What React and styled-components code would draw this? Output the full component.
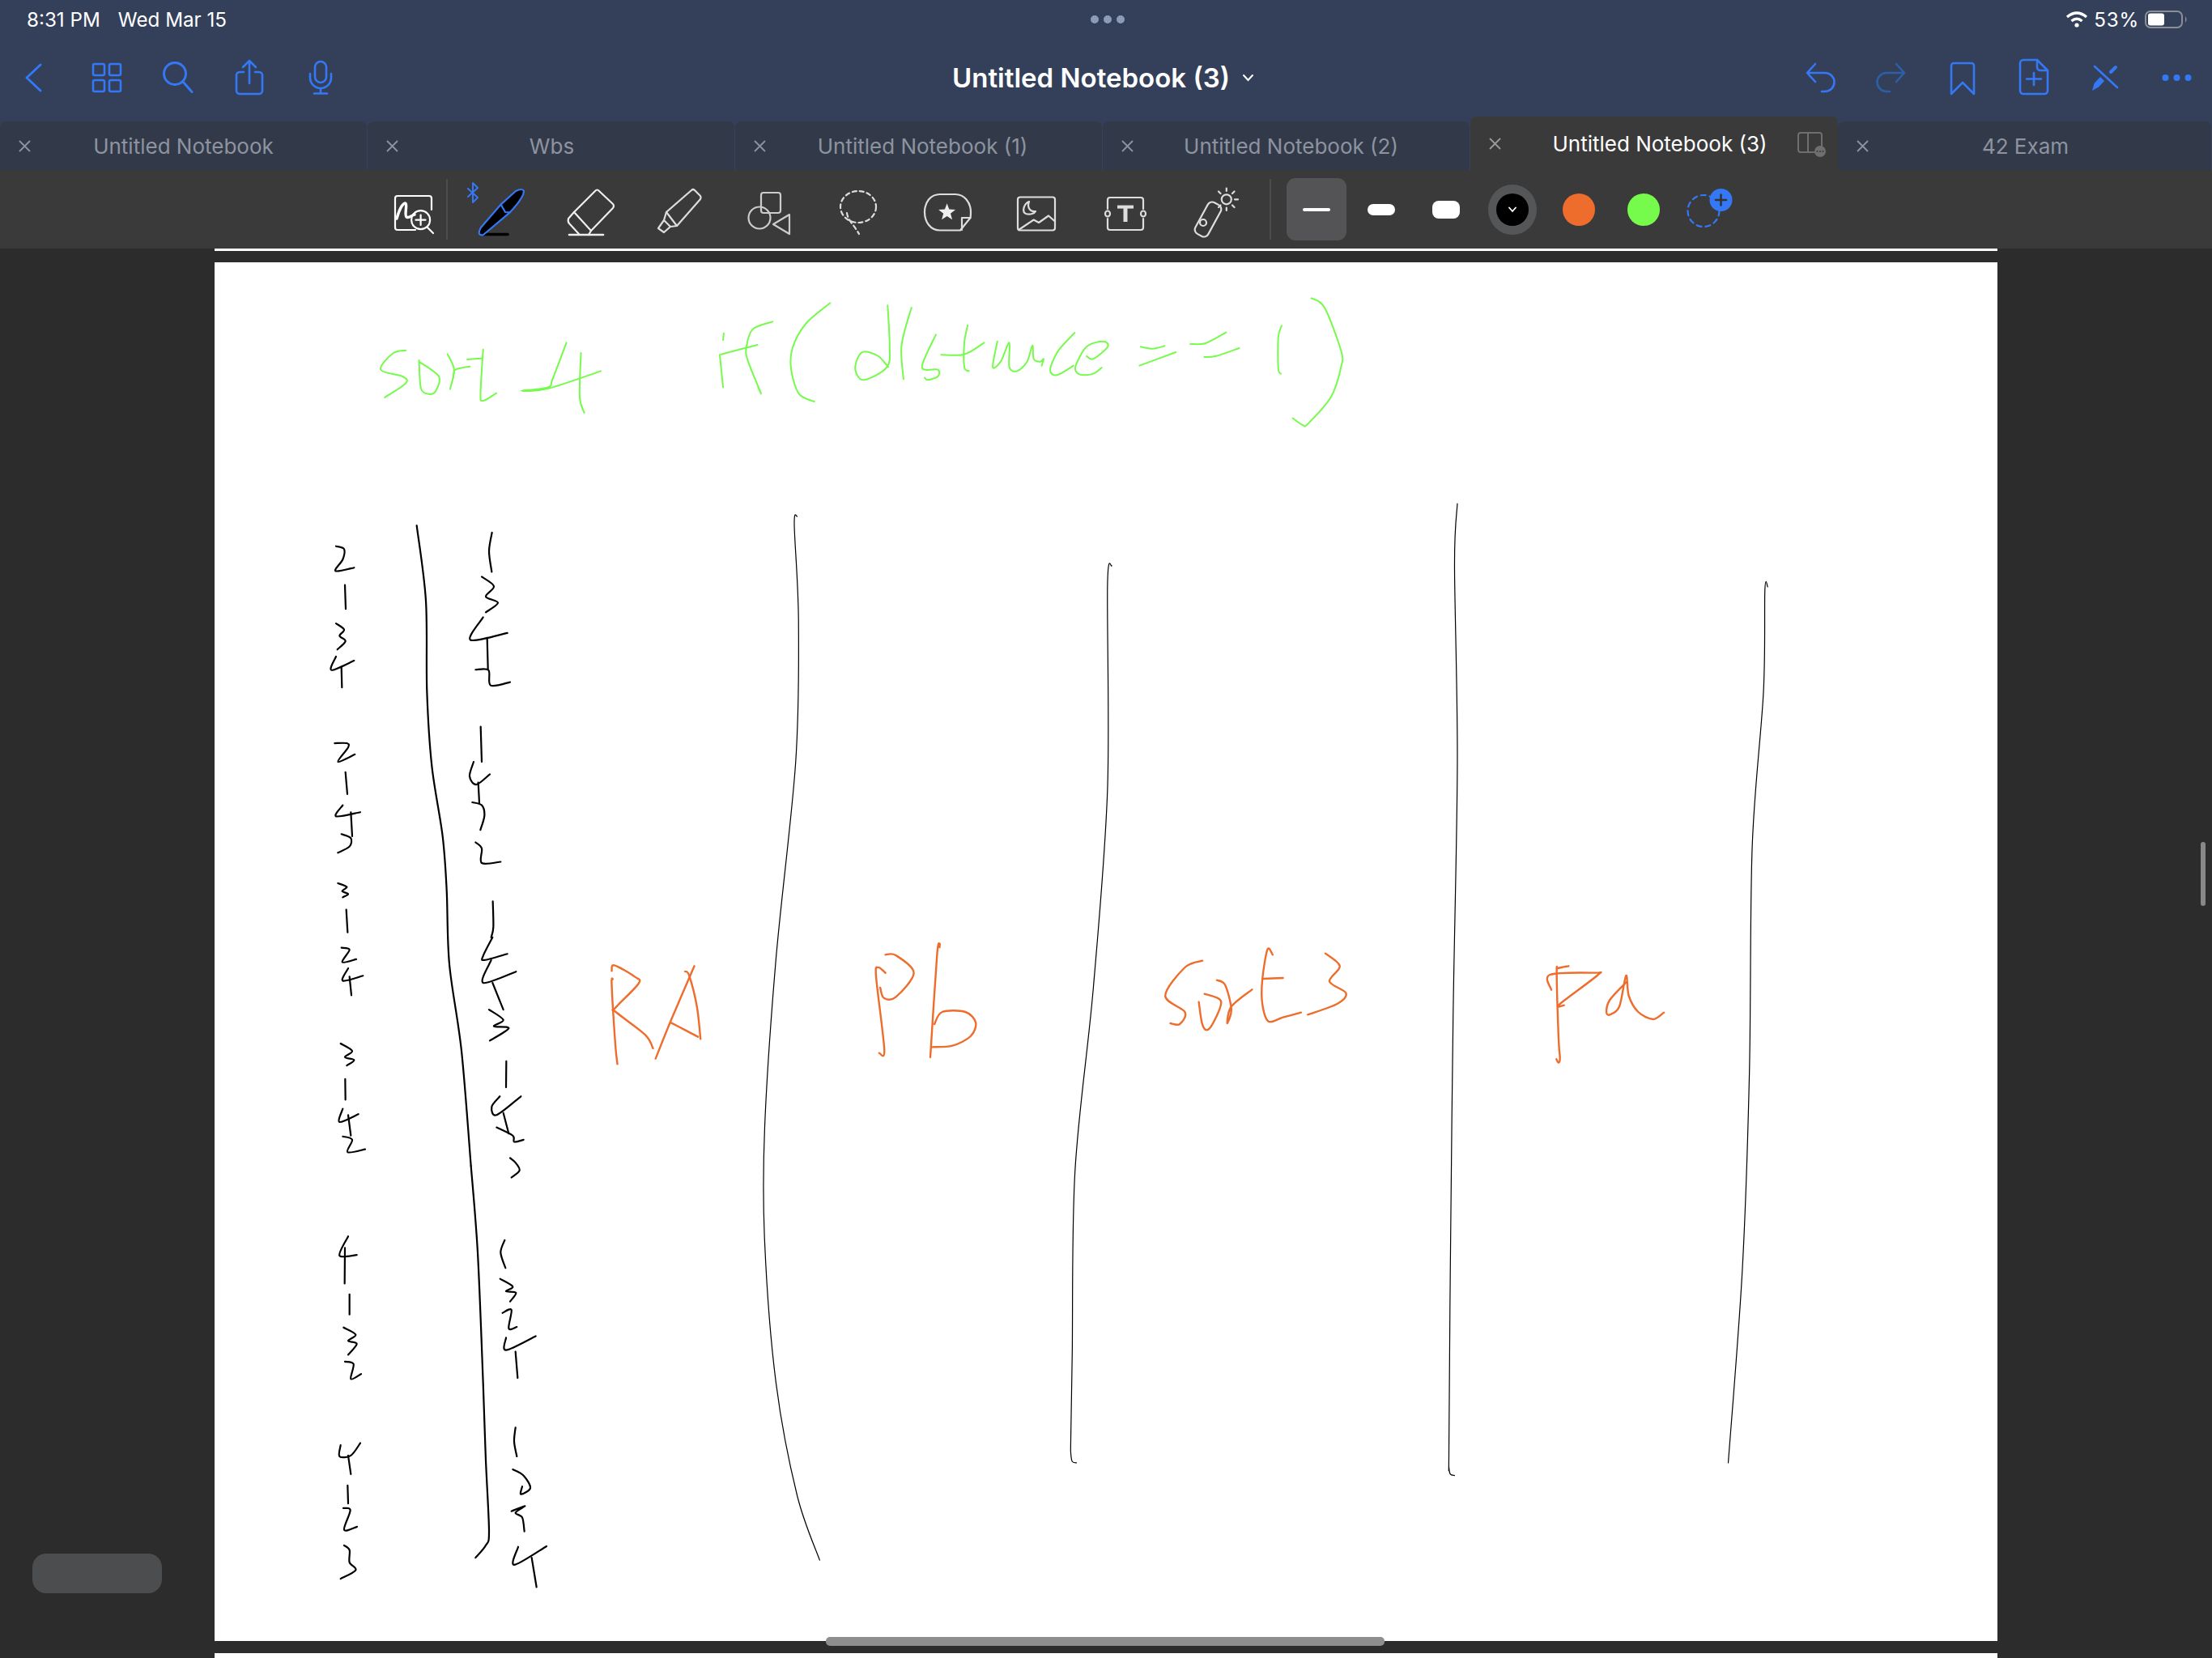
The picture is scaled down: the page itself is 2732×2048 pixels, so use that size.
import React from "react";
import styled, { createGlobalStyle } from "styled-components";

const BLUE = "#3478f6";

const Global = createGlobalStyle`
  html, body { margin: 0; padding: 0; background: #2c2c2c; }
  body { font-family: Inter, "Noto Sans", sans-serif; overflow: hidden; }
  svg { overflow: visible; display: block; }
`;

const Screen = styled.div`
  position: relative;
  width: 2732px;
  height: 2048px;
  display: flex;
  flex-direction: column;
  overflow: hidden;
  background: #2c2c2c;
`;
const Header = styled.header`
  background: #344059;
  display: flex;
  flex-direction: column;
`;
const StatusBar = styled.div`
  height: 48px;
  display: grid;
  grid-template-columns: 1fr auto 1fr;
  align-items: center;
  padding: 0 30px 0 33px;
  color: #fff;
  font-size: 24.2px;
`;
const StatusLeft = styled.div`
  display: flex;
  gap: 22px;
`;
const StatusRight = styled.div`
  display: flex;
  justify-content: flex-end;
  align-items: center;
  gap: 7px;
`;
const Percent = styled.span`
  letter-spacing: 0.8px;
`;
const Grabber = styled.div`
  display: flex;
  gap: 6px;
`;
const GrabDot = styled.span`
  width: 10px;
  height: 10px;
  border-radius: 50%;
  background: #8d9bb8;
`;
const NavBar = styled.nav`
  height: 96px;
  display: grid;
  grid-template-columns: 1fr auto 1fr;
  align-items: center;
`;
const NavGroup = styled.div`
  display: flex;
  justify-content: ${(p) => (p.$end ? "flex-end" : "flex-start")};
`;
const NavButton = styled.div`
  width: 88px;
  height: 48px;
  display: flex;
  justify-content: center;
  color: ${(p) => (p.$dim ? "#2d5ea8" : BLUE)};
`;
const Title = styled.div`
  display: flex;
  align-items: center;
  gap: 16px;
  color: #fff;
  font-size: 33px;
  font-weight: 600;
  margin-right: 8px;
`;
const TabRow = styled.div`
  height: 66px;
  display: flex;
  align-items: flex-end;
`;
const Tab = styled.div`
  position: relative;
  flex: ${(p) => (p.$last ? "1" : "0 0 454px")};
  height: ${(p) => (p.$active ? "66px" : "60px")};
  display: grid;
  grid-template-columns: 60px 1fr 60px;
  align-items: center;
  justify-items: center;
  box-sizing: border-box;
  border-radius: 8px 8px 0 0;
  border-right: ${(p) => (p.$active ? "none" : "1px solid #36415a")};
  background: ${(p) => (p.$active ? "#3a3a3a" : "#323a49")};
  color: ${(p) => (p.$active ? "#fff" : "#8e93a0")};
  font-size: 26px;
`;
const TabTitle = styled.span`
  padding-left: ${(p) => p.$pad}px;
`;
const TabClose = styled.svg`
  width: 15px;
  height: 15px;
  justify-self: start;
  margin-left: 23px;
  stroke: ${(p) => (p.$active ? "#9a9a9a" : "currentColor")};
  stroke-width: 1.8;
  fill: none;
`;
const SplitIcon = styled.div`
  position: absolute;
  right: 14px;
  top: 19px;
  color: #6f6f6f;
`;
const Toolbar = styled.div`
  height: 97px;
  background: #3a3a3a;
  display: flex;
  align-items: center;
  padding-left: 470px;
`;
const ToolDivider = styled.div`
  width: 2px;
  height: 75px;
  background: #4c4c4c;
  margin: ${(p) => p.$margin};
`;
const ToolCell = styled.div`
  width: ${(p) => p.$w}px;
  height: 70px;
  flex: none;
  display: flex;
  justify-content: center;
`;
const Swatch = styled.div`
  width: ${(p) => p.$w || 80}px;
  flex: none;
  display: flex;
  justify-content: center;
  align-items: center;
  height: 80px;
`;
const WidthBox = styled.div`
  width: 74px;
  height: 77px;
  border-radius: 11px;
  background: #545456;
  display: flex;
  justify-content: center;
  align-items: center;
`;
const WidthBar = styled.div`
  width: 34px;
  height: ${(p) => p.$h}px;
  border-radius: ${(p) => (p.$h > 16 ? 8 : p.$h / 2)}px;
  background: #fff;
`;
const Ring = styled.div`
  width: 60px;
  height: 62px;
  border-radius: 50%;
  background: #555658;
  display: flex;
  justify-content: center;
  align-items: center;
`;
const Dot = styled.div`
  width: 40px;
  height: 40px;
  border-radius: 50%;
  background: ${(p) => p.$c};
  display: flex;
  justify-content: center;
  align-items: center;
`;
const Viewer = styled.main`
  flex: 1;
  background: #2c2c2c;
  display: flex;
  flex-direction: column;
  align-items: flex-start;
  padding-left: 265px;
`;
const Sheet = styled.div`
  width: 2202px;
  height: ${(p) => p.$h}px;
  flex: none;
  margin-top: ${(p) => p.$top || 0}px;
  background: #fff;
`;
const Pill = styled.div`
  position: absolute;
  left: 40px;
  top: 1919px;
  width: 160px;
  height: 49px;
  border-radius: 17px;
  background: #4c4d4f;
`;
const HScroll = styled.div`
  position: absolute;
  left: 1020px;
  top: 2022px;
  width: 690px;
  height: 11px;
  border-radius: 5px;
  background: #8e8e8e;
`;
const VScroll = styled.div`
  position: absolute;
  left: 2718px;
  top: 1040px;
  width: 6px;
  height: 79px;
  border-radius: 3px;
  background: #888;
`;

/* ---------- icons ---------- */
const Ico = styled.svg.attrs((p) => ({
  viewBox: `0 0 ${p.$s} ${p.$s}`,
  width: p.$s,
  height: p.$s,
}))`
  fill: none;
  stroke: ${(p) => p.$c || "currentColor"};
  stroke-width: ${(p) => p.$sw || 2.6};
  stroke-linecap: round;
  stroke-linejoin: round;
`;
const Nav = (p) => <Ico $s={48} {...p} />;
const Tool = (p) => <Ico $s={70} $sw={2.2} {...p} />;

const ICONS = {
  back: <Nav $sw={3}><path d="M30 8 L13 24 L30 40" /></Nav>,
  grid: (
    <Nav>
      <rect x="7" y="7" width="14" height="14" rx="2" />
      <rect x="27" y="7" width="14" height="14" rx="2" />
      <rect x="7" y="27" width="14" height="14" rx="2" />
      <rect x="27" y="27" width="14" height="14" rx="2" />
    </Nav>
  ),
  search: (
    <Nav $sw={3}>
      <circle cx="20" cy="19" r="13.5" />
      <path d="M30 29 L41 41.5" />
    </Nav>
  ),
  share: (
    <Nav>
      <path d="M17 17 H12 a4 4 0 0 0 -4 4 V40 a4 4 0 0 0 4 4 H36 a4 4 0 0 0 4 -4 V21 a4 4 0 0 0 -4 -4 H31" />
      <path d="M24 3 V31 M16 11 L24 3 L32 11" />
    </Nav>
  ),
  mic: (
    <Nav>
      <rect x="17" y="4" width="14" height="26" rx="7" />
      <path d="M11 19 v5 a13 13 0 0 0 26 0 v-5 M24 37 V43 M16 43.5 H32" />
    </Nav>
  ),
  undo: <Nav><path d="M18 7 L8 18 L18 29 M9 18 H30 a11.5 11.5 0 0 1 0 23 H26" /></Nav>,
  redo: <Nav><path d="M30 7 L40 18 L30 29 M39 18 H18 a11.5 11.5 0 0 0 0 23 H22" /></Nav>,
  bookmark: <Nav><path d="M10 44 V9 a3 3 0 0 1 3 -3 H35 a3 3 0 0 1 3 3 V44 L24 30 Z" /></Nav>,
  file: (
    <Nav>
      <path d="M11 2 H28 L41 15 V40 a4 4 0 0 1 -4 4 H11 a4 4 0 0 1 -4 -4 V6 a4 4 0 0 1 4 -4 Z" />
      <path d="M28 2 V11 a4 4 0 0 0 4 4 H41 M24 18 V33 M15 25.5 H33" />
    </Nav>
  ),
  nopen: (
    <Nav>
      <path d="M11 10 L39 36" />
      <path d="M8 40 L10.5 31 L18 23 L23 28 L16 35.5 Z" fill="currentColor" stroke="none" />
      <path d="M31 17 L37 11" strokeWidth="4" />
    </Nav>
  ),
  dots: (
    <Nav $sw={0}>
      <g fill="currentColor" stroke="none">
        <circle cx="10.5" cy="24" r="4" />
        <circle cx="24.5" cy="24" r="4" />
        <circle cx="38.5" cy="24" r="4" />
      </g>
    </Nav>
  ),
};

const TOOLS = [
  <Tool key="pen" $c={BLUE}>
    <path d="M-7 9 L5 20 L-1 26 L-1 2 L5 8 L-7 19" strokeWidth="2" />
    <path d="M12 65.5 H42" stroke="#000" strokeWidth="3.5" />
    <path d="M7 65 Q6 62 9 57 L33.6 28.6 L52 12 Q60 8 62 12 Q62 20 44.8 38.3 L12 66 Q9 67 7 65 Z" fill="#000" />
    <path d="M33.6 28.6 L39 38 L44.8 38.3" />
  </Tool>,
  <Tool key="eraser" $c="#eee">
    <path d="M40 12 Q42.5 9 45 12 L62 28 Q64 30 62 33 L35 61 L14 38 Z" />
    <path d="M14 38 L7 46 Q6 50 8 52 L20 65 M35 61 L32 66" />
    <path d="M8 66 H50" strokeWidth="2.6" />
  </Tool>,
  <Tool key="marker" $c="#ddd">
    <path d="M18 38 L49 11 Q51 9 53 11 L60 18 Q61 20 60 22 L31 55 Z" />
    <path d="M18 38 L15 48 L8 58 L15 63 L23 56 L31 55 M15 48 L23 56" />
  </Tool>,
  <Tool key="shapes" $c="#ccc">
    <rect x="25" y="14" width="24" height="25" rx="3" />
    <circle cx="23" cy="45" r="13.5" />
    <path d="M60 41 L40 53 L60 65 Z" />
  </Tool>,
  <Tool key="lasso" $c="#ddd">
    <ellipse cx="35" cy="31.5" rx="22" ry="19.5" strokeDasharray="5 4" />
    <path d="M21 39 C22 48 30 54 36 65" strokeDasharray="5 4" />
  </Tool>,
  <Tool key="sticker" $c="#ddd">
    <path d="M51 60.5 H26 C14 60.5 7 50 7 38 C7 26 14 16 26 16 H45 C56 16 64 26 64 38 C64 42 63.5 45 63.5 45 Z" />
    <path d="M63.5 45 H53 V60" />
    <path
      d="M34.6 27.3 L37.3 34.6 L45.1 34.9 L39 39.7 L41.1 47.2 L34.6 42.9 L28.1 47.2 L30.2 39.7 L24.1 34.9 L31.9 34.6 Z"
      fill="#eee"
      stroke="none"
    />
  </Tool>,
  <Tool key="image" $c="#ddd">
    <rect x="12" y="19.5" width="46" height="41" rx="3" />
    <path d="M26 25 C19 28 17 38 22 40 C28 42 33 39 34 37 C28 38 23 33 26 25 Z" />
    <path d="M13 60 L31.7 47.5 L38 51 L50 42.5 L58 49.5" />
  </Tool>,
  <Tool key="text" $c="#ddd">
    <path d="M13 34 V23 a3 3 0 0 1 3 -3 H54 a3 3 0 0 1 3 3 V34 M13 46 V57 a3 3 0 0 0 3 3 H54 a3 3 0 0 0 3 -3 V46" />
    <ellipse cx="13" cy="40" rx="3" ry="3.5" />
    <ellipse cx="57" cy="40" rx="3" ry="3.5" />
    <path d="M25 31.6 H45" strokeWidth="4" strokeLinecap="butt" />
    <path d="M35 32 V50" strokeWidth="5" strokeLinecap="butt" />
  </Tool>,
  <Tool key="laser" $c="#ddd">
    <rect x="18" y="25" width="18" height="44" rx="6" transform="rotate(28.6 27 47)" />
    <circle cx="21" cy="51" r="4" />
    <circle cx="49.8" cy="22.3" r="6" />
    <path d="M49.8 12 V8.5 M57 15 L59.5 12.5 M60 22.3 H64 M57 29.5 L59.5 32 M49.8 32.5 V36 M42.5 29.5 L40 32 M42.5 15 L40 12.5" />
  </Tool>,
];

/* ---------- ink ---------- */
function smooth(pts) {
  const p = [];
  for (let i = 0; i < pts.length; i += 2) p.push([pts[i], pts[i + 1]]);
  let d = `M${p[0][0]} ${p[0][1]}`;
  for (let i = 0; i < p.length - 1; i++) {
    const a = p[Math.max(i - 1, 0)];
    const b = p[i];
    const c = p[i + 1];
    const e = p[Math.min(i + 2, p.length - 1)];
    const k = 0.16;
    d += ` C${b[0] + (c[0] - a[0]) * k} ${b[1] + (c[1] - a[1]) * k} ${c[0] - (e[0] - b[0]) * k} ${c[1] - (e[1] - b[1]) * k} ${c[0]} ${c[1]}`;
  }
  return d;
}

const BLACK = "#000";
const ORANGE = "#ee6c2c";
const GREEN = "#76fb4c";

const INK = [
  {
    t: [380, 640, 3, 1.96], c: BLACK, w: 2.2,
    s: [
      [404,18,438,200,442,420,460,600,500,770,515,900,525,1080,570,1290,605,1568],
      [105,68,135,75,130,100,103,128,172,120],[138,162,141,220],[105,255,135,270,118,285,140,298,110,318],
      [105,335,88,368,172,345],[125,360,127,410],
      [100,545,145,545,150,555,112,590,175,572],[140,615,147,668],[130,695,105,722,195,712],[160,712,165,770],
      [125,765,160,775,155,795,112,810],
      [112,884,145,893,128,903,150,910,130,918],[143,948,148,1003],[125,1040,155,1045,128,1075,180,1068],
      [150,1090,130,1120,205,1108],[155,1110,162,1155],
      [122,1272,165,1290,138,1305,172,1312,145,1325],[139,1358,140,1408],[130,1430,118,1462,188,1443],[150,1445,160,1495],
      [130,1497,165,1505,148,1535,213,1528],
      [683,35,672,80,682,130],[645,142,690,165,660,190,705,205,660,228],[650,240,603,295,740,278],[665,290,668,365],
      [622,367,670,368,678,405,750,397],
      [641,505,645,590],[615,590,600,625,625,645,675,620],[632,640,636,690],[610,688,645,695,655,720,640,755],
      [622,785,645,800,645,835,715,832],
      [686,928,688,990,680,1015],[685,1015,650,1060,655,1070,740,1055],[680,1070,650,1125,772,1098],[685,1125,725,1190],
      [672,1190,725,1215,690,1230,745,1235,675,1265],
      [736,1315,735,1378],[712,1400,682,1425,700,1445,790,1400],[725,1440,745,1490],[700,1475,760,1495,765,1510,800,1505],
    ],
  },
  {
    t: [380, 1440, 3, 2.613], c: BLACK, w: 2.2,
    s: [
      [605,0,630,280,650,700,660,950,672,1180,660,1225,622,1265],
      [750,-25,770,-10,785,15,755,38],
      [150,228,118,290,182,288],[138,265,137,380],[155,415,155,480],[133,522,178,545,150,565,182,575,150,610],[138,632,170,640,160,688,198,672],
      [195,895,160,935,118,938,122,902],[150,935,160,995],[148,1032,150,1090],[132,1105,158,1112,135,1175,183,1165],
      [135,1225,155,1240,155,1280,178,1305,122,1333],
      [730,240,715,280,733,330],[713,365,760,390,735,405,772,410,750,438],[722,475,755,465,745,525,775,520],
      [735,555,735,595,845,550],[770,600,778,685],
      [770,845,765,890,775,938],[760,980,800,1000,825,1040,790,1060,795,1035],[755,1115,805,1098,770,1120,795,1135,803,1180],
      [780,1230,765,1288,885,1228],[830,1265,848,1360],
    ],
  },
  {
    t: [0, 0, 0.5739, 0.5739], c: BLACK, w: 1.2,
    s: [
      [565,366,563,372,566,440,564,540,550,680,542,800,542,880,550,980,565,1060,581,1106],
      [788,401,785,415,785,560,775,700,762,830,760,960,759,1020,759,1030,760,1036,763,1037],
      [1033,357,1031,400,1033,540,1030,720,1028,900,1027,1030,1027,1040,1028,1045,1031,1046],
      [1253,416,1251,418,1250,490,1242,600,1240,760,1235,900,1225,1037],
    ],
  },
  {
    t: [440, 340, 1.225, 3], c: GREEN, w: 2,
    s: [
      [75,278,55,290,37,350,70,375,75,400,43,453],[95,315,98,420,110,440,120,430,125,375,95,320],
      [138,292,148,350,142,422],[147,380,150,350,172,338],[192,275,188,440,192,465,212,437],[168,312,190,308],
      [318,250,297,385,290,415,250,428,290,420,370,355],[340,288,338,450,345,510],
      [556,215,555,240],[550,295,555,415],[630,172,600,200,590,270,593,320,612,435,608,415],[552,293,607,258],
      [717,103,680,180,660,270,658,350,670,440,693,468],
      [804,112,807,260,803,340,768,388,755,350,760,300,770,283,790,300,805,340],[840,120,825,260,828,385],
      [877,220,856,340,880,350,880,375,865,388,860,380],[925,185,920,250,920,340,927,355],[885,295,920,293,950,250],
      [970,245,963,340,975,320,988,250,988,340,1000,355,1015,320,1023,260,1025,310,1035,320,1040,310,1037,335],
      [1087,213,1062,280,1050,350,1060,370,1085,335],
      [1105,300,1115,310,1137,265,1130,245,1105,265,1088,340,1095,368,1115,365,1128,342],
      [1187,265,1205,272,1223,262],[1185,335,1240,285],[1262,255,1285,252,1316,212],[1283,303,1300,300,1336,270],
      [1400,187,1395,230,1395,345,1399,365],
      [1445,85,1465,120,1490,280,1490,340,1475,450,1440,550,1432,555,1417,530],
    ],
  },
  {
    t: [730, 1150, 1.568, 3], c: ORANGE, w: 2.4,
    s: [
      [42,178,40,200,47,420,51,493],[40,148,45,127,85,170,92,195,47,285,48,300,105,385,120,435],
      [125,473,155,330,200,130],[182,150,190,165,205,280,212,400],[155,340,180,365,207,392],
      [570,155,556,135,552,170,568,440,558,452],[570,88,590,90,625,155,590,245,567,248,560,210],
      [675,60,675,48,670,90,657,468],[665,345,680,300,725,300,745,340,735,390,700,425,660,430],
      [1184,110,1150,135,1112,240,1150,300,1140,345,1122,342],[1177,263,1183,340,1192,367,1205,340,1220,260,1188,233],
      [1212,182,1228,200,1240,290,1232,342,1240,280,1280,217],
      [1320,88,1310,68,1300,180,1300,270,1312,335,1340,320,1375,302],[1300,177,1340,174],
      [1422,83,1450,130,1430,187,1462,230,1445,270,1388,310],
    ],
  },
  {
    t: [1880, 1150, 3, 3], c: ORANGE, w: 2.4,
    s: [
      [172,130,135,138,128,155,135,400,140,470,135,488,127,475],[108,218,103,162,270,155,278,165,138,272,155,275],
      [385,190,325,255,312,300,325,310,360,280,385,165,395,240,430,300,485,327,525,302],
    ],
  },
];

const InkSvg = styled.svg.attrs({ viewBox: "265 324 2202 1703" })`
  width: 2202px;
  height: 1703px;
  fill: none;
  stroke-linecap: round;
  stroke-linejoin: round;
`;
const Stroke = styled.path`
  vector-effect: non-scaling-stroke;
`;

const Ink = () => (
  <InkSvg>
    {INK.map((g, i) => (
      <g
        key={i}
        stroke={g.c}
        strokeWidth={g.w}
        transform={`translate(${g.t[0]} ${g.t[1]}) scale(${1 / g.t[2]} ${1 / g.t[3]})`}
      >
        {g.s.map((s, j) => (
          <Stroke key={j} d={smooth(s)} />
        ))}
      </g>
    ))}
  </InkSvg>
);

const LEFT = ["back", "grid", "search", "share", "mic"];
const RIGHT = ["undo", "redo", "bookmark", "file", "nopen", "dots"];
const TABS = [
  { t: "Untitled Notebook", pad: 0 },
  { t: "Wbs", pad: 2 },
  { t: "Untitled Notebook (1)", pad: 10 },
  { t: "Untitled Notebook (2)", pad: 12 },
  { t: "Untitled Notebook (3)", pad: 14 },
  { t: "42 Exam", pad: 2 },
];

export default function App() {
  return (
    <Screen>
      <Global />
      <Header>
        <StatusBar>
          <StatusLeft>
            <span>8:31 PM</span>
            <span>Wed Mar 15</span>
          </StatusLeft>
          <Grabber>
            <GrabDot />
            <GrabDot />
            <GrabDot />
          </Grabber>
          <StatusRight>
            <svg width="28" height="20" viewBox="0 0 28 20" fill="none" stroke="#fff" strokeWidth="3.4">
              <path d="M2 7 Q14 -3 26 7" />
              <path d="M7.5 12 Q14 6.5 20.5 12" />
              <circle cx="14" cy="17" r="2.6" fill="#fff" stroke="none" />
            </svg>
            <Percent>53%</Percent>
            <svg width="53" height="22" viewBox="0 0 53 22" fill="none">
              <rect x="1" y="1" width="45" height="20" rx="6" stroke="#8a8f9a" strokeWidth="2" />
              <rect x="4" y="3.5" width="20" height="15" rx="3" fill="#fff" />
              <path d="M50 7 q3 4 0 8 Z" fill="#8a8f9a" />
            </svg>
          </StatusRight>
        </StatusBar>
        <NavBar>
          <NavGroup>
            {LEFT.map((k) => (
              <NavButton key={k}>{ICONS[k]}</NavButton>
            ))}
          </NavGroup>
          <Title>
            <span>Untitled Notebook (3)</span>
            <svg width="13" height="8" viewBox="0 0 13 8" fill="none" stroke="#fff" strokeWidth="2" strokeLinecap="round">
              <path d="M1 1 L6.5 7 L12 1" />
            </svg>
          </Title>
          <NavGroup $end>
            {RIGHT.map((k) => (
              <NavButton key={k} $dim={k === "redo"}>
                {ICONS[k]}
              </NavButton>
            ))}
          </NavGroup>
        </NavBar>
        <TabRow>
          {TABS.map(({ t, pad }, i) => (
            <Tab key={t} $active={i === 4} $last={i === 5}>
              <TabClose viewBox="0 0 15 15" $active={i === 4}>
                <path d="M1 1 L14 14 M14 1 L1 14" />
              </TabClose>
              <TabTitle $pad={pad}>{t}</TabTitle>
              {i === 4 && (
                <SplitIcon>
                  <svg width="36" height="34" viewBox="0 0 36 34" fill="none" stroke="currentColor" strokeWidth="2">
                    <rect x="1" y="1" width="29" height="24" rx="3" />
                    <path d="M13 1 V25" />
                    <circle cx="28" cy="24" r="7" fill="currentColor" stroke="none" />
                    <g fill="#3a3a3a" stroke="none">
                      <circle cx="24.5" cy="24" r="1" />
                      <circle cx="28" cy="24" r="1" />
                      <circle cx="31.5" cy="24" r="1" />
                    </g>
                  </svg>
                </SplitIcon>
              )}
            </Tab>
          ))}
        </TabRow>
      </Header>
      <Toolbar>
        <ToolCell $w={80}>
          <Tool $c="#fff">
            <path d="M38 60 H16 a3 3 0 0 1 -3 -3 V21 a3 3 0 0 1 3 -3 H55 a3 3 0 0 1 3 3 V35" />
            <path d="M15 46 C18 35 22 28 25 27 C29 27 24 42 27 44 C30 46 33 42 37 41" strokeWidth="3.4" />
            <circle cx="44.6" cy="47.7" r="11.5" />
            <path d="M38.5 47.7 H50.5 M44.6 41.5 V54 M53 57 L60 64" />
          </Tool>
        </ToolCell>
        <ToolDivider $margin="0 12px 0 1px" />
        {TOOLS.map((tool) => (
          <ToolCell key={tool.key} $w={110}>
            {tool}
          </ToolCell>
        ))}
        <ToolDivider $margin="0 16px 0 13px" />
        <Swatch>
          <WidthBox>
            <WidthBar $h={4} />
          </WidthBox>
        </Swatch>
        <Swatch>
          <WidthBar $h={14} />
        </Swatch>
        <Swatch>
          <WidthBar $h={22} />
        </Swatch>
        <Swatch $w={84}>
          <Ring>
            <Dot $c="#000">
              <svg width="10" height="8" viewBox="0 0 10 8" fill="none" stroke="#fff" strokeWidth="1.8" strokeLinecap="round">
                <path d="M1 1.5 L5 6 L9 1.5" />
              </svg>
            </Dot>
          </Ring>
        </Swatch>
        <Swatch>
          <Dot $c={ORANGE} />
        </Swatch>
        <Swatch>
          <Dot $c={GREEN} />
        </Swatch>
        <ToolCell $w={80}>
          <Tool $c={BLUE}>
            <circle cx="29" cy="36.5" r="19.5" strokeDasharray="6 5" />
            <circle cx="50.5" cy="23" r="14" fill={BLUE} stroke="none" />
            <path d="M44 23 H57 M50.5 16.5 V29.5" stroke="#333" strokeWidth="2.6" />
          </Tool>
        </ToolCell>
      </Toolbar>
      <Viewer>
        <Sheet $h={3} />
        <Sheet $h={1703} $top={14}>
          <Ink />
        </Sheet>
        <Sheet $h={6} $top={15} />
      </Viewer>
      <Pill />
      <HScroll />
      <VScroll />
    </Screen>
  );
}
